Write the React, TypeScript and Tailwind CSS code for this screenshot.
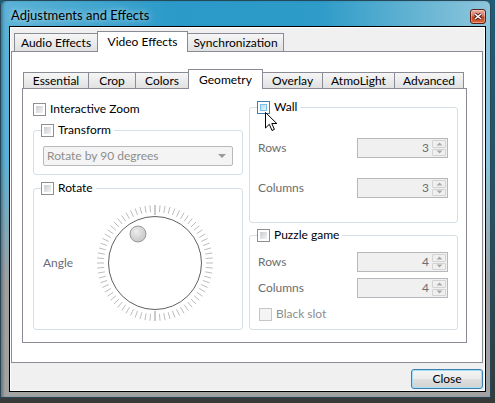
import React from 'react'

function Check({ hover, disabled }: { hover?: boolean; disabled?: boolean }) {
  if (hover) {
    return (
      <span className="block w-[13px] h-[13px] shrink-0 border border-[#3c7fb1] bg-white p-[2px]">
        <span className="block w-full h-full border border-[#79c0ec] bg-[linear-gradient(135deg,#b8dcf3,#e6f5fd)]" />
      </span>
    )
  }
  if (disabled) {
    return (
      <span className="block w-[13px] h-[13px] shrink-0 border border-[#c6c6c6] bg-[#f4f4f4]" />
    )
  }
  return (
    <span className="block w-[13px] h-[13px] shrink-0 border border-[#8e8f8f] bg-white p-[2px]">
      <span className="block w-full h-full bg-[linear-gradient(135deg,#c9ccd1,#f3f3f3)]" />
    </span>
  )
}

function Tab({ label, w, active, inner }: { label: string; w: number; active?: boolean; inner?: boolean }) {
  const base = 'flex items-center justify-center -ml-px first:ml-0 border border-b-0 border-[#898c95] whitespace-nowrap'
  if (active) {
    return (
      <div
        className={`${base} relative z-10 -mb-px bg-white ${inner ? 'h-[20px]' : 'h-[21px]'}`}
        style={{ width: w }}
      >
        {label}
      </div>
    )
  }
  return (
    <div
      className={`${base} bg-[linear-gradient(180deg,#f6f6f6,#e1e1e1)] ${inner ? 'h-[16px]' : 'h-[18px]'}`}
      style={{ width: w }}
    >
      {label}
    </div>
  )
}

function Spin({ value }: { value: string }) {
  return (
    <div className="flex w-[91px] h-[20px] border border-[#b5b8bc] bg-[#f0f0f0]">
      <div className="flex-1 flex items-center justify-end pr-[3px] text-[#6d6d6d]">{value}</div>
      <div className="w-[15px] flex flex-col gap-px py-px pr-px">
        <div className="flex-1 flex items-center justify-center border border-[#d3d3d3] rounded-[1px]">
          <svg width="7" height="4" viewBox="0 0 7 4">
            <path d="M0.5 3.5 L3.5 0.5 L6.5 3.5 Z" fill="#a8a8a8" />
          </svg>
        </div>
        <div className="flex-1 flex items-center justify-center border border-[#d3d3d3] rounded-[1px]">
          <svg width="7" height="4" viewBox="0 0 7 4">
            <path d="M0.5 0.5 L3.5 3.5 L6.5 0.5 Z" fill="#a8a8a8" />
          </svg>
        </div>
      </div>
    </div>
  )
}

function Dial() {
  const ticks = []
  for (let i = 0; i < 72; i++) {
    const a = (i * 5 * Math.PI) / 180
    const major = i % 36 === 0
    const r1 = major ? 48 : 51
    const r2 = 58
    ticks.push(
      <line
        key={i}
        x1={60 + r1 * Math.sin(a)}
        y1={60 - r1 * Math.cos(a)}
        x2={60 + r2 * Math.sin(a)}
        y2={60 - r2 * Math.cos(a)}
        stroke={major ? '#8a8a8a' : '#b4b4b4'}
        strokeWidth={0.9}
      />
    )
  }
  return (
    <svg width="120" height="120" viewBox="0 0 120 120">
      <defs>
        <radialGradient id="knob" cx="0.4" cy="0.35" r="0.7">
          <stop offset="0" stopColor="#ededed" />
          <stop offset="1" stopColor="#c4c4c4" />
        </radialGradient>
      </defs>
      {ticks}
      <circle cx="60" cy="60" r="46.5" fill="white" stroke="#616161" strokeWidth="1" />
      <circle cx="43" cy="31" r="8" fill="url(#knob)" stroke="#9a9a9a" strokeWidth="1" />
    </svg>
  )
}

function Legend({ label, hover }: { label: string; hover?: boolean }) {
  return (
    <legend className="ml-[7px] pr-[3px]">
      <span className="flex h-[14px] items-center gap-[4px]">
        <Check hover={hover} />
        <span>{label}</span>
      </span>
    </legend>
  )
}

export default function App() {
  return (
    <div className="relative w-[495px] h-[403px] bg-[linear-gradient(180deg,#1f5d77_0%,#2b4e5d_55%,#393939_100%)] font-[Lato,'Liberation_Sans',sans-serif] text-[12px] leading-none text-black">
      <div className="flex flex-col w-[491px] h-[398px] rounded-t-[6px] border border-[#25475a] pl-[8px] pr-[4px] pb-[5px] shadow-[inset_3px_0_3px_-1px_rgba(0,0,0,0.3)] bg-[linear-gradient(180deg,rgba(160,160,160,0)_0%,rgba(160,160,160,0)_40%,#a0a0a0_72%,#a3a3a3_100%),linear-gradient(90deg,#5db3d7_0%,#2b9ac8_35%,#2e9bc8_65%,#8ec6dc_100%)]">
        {/* title bar */}
        <div className="h-[25px] flex items-start justify-between">
          <span className="pl-[2px] pt-[8px] text-[13px] [text-shadow:0_0_6px_rgba(255,255,255,0.9)]">
            Adjustments and Effects
          </span>
          <div className="mt-[8px] w-[16px] h-[15px] rounded-[3px] border border-[#5b1e14] flex items-center justify-center shadow-[inset_0_0_0_1px_rgba(255,255,255,0.35)] bg-[linear-gradient(180deg,#eab0a2_0%,#d8735d_45%,#c2401f_55%,#d9693f_100%)]">
            <svg width="8" height="7" viewBox="0 0 8 7">
              <path d="M1 1 L7 6 M7 1 L1 6" stroke="#3a0e08" strokeWidth="3" />
              <path d="M1 1 L7 6 M7 1 L1 6" stroke="white" strokeWidth="1.6" />
            </svg>
          </div>
        </div>

        {/* client */}
        <div className="flex-1 border border-black">
          <div className="h-full flex flex-col border border-white bg-[#f0f0f0] pr-px">
            {/* outer tabs */}
            <div className="flex items-end h-[23px] pl-[3px]">
              <Tab label="Audio Effects" w={84} />
              <Tab label="Video Effects" w={91} active />
              <Tab label="Synchronization" w={97} />
            </div>

            {/* outer pane */}
            <div className="h-[312px] flex flex-col border border-[#898c95] bg-white pl-[10px] pr-[15px]">
              {/* inner tabs */}
              <div className="flex items-end h-[36px] pl-px">
                <Tab inner label="Essential" w={66} />
                <Tab inner label="Crop" w={48} />
                <Tab inner label="Colors" w={54} />
                <Tab inner active label="Geometry" w={75} />
                <Tab inner label="Overlay" w={61} />
                <Tab inner label="AtmoLight" w={73} />
                <Tab inner label="Advanced" w={70} />
              </div>

              {/* inner pane */}
              <div className="h-[255px] flex gap-[6px] border border-[#898c95] bg-white pl-[10px] pr-[8px] pt-[11px]">
                {/* left column */}
                <div className="w-[210px] flex flex-col">
                  <div className="mt-[2px] h-[14px] flex items-center gap-[4px]">
                    <Check />
                    <span>Interactive Zoom</span>
                  </div>

                  <fieldset className="mt-[7px] h-[52px] rounded-[3px] border border-[#d5dfe5]">
                    <Legend label="Transform" />
                    <div className="px-[9px] mt-[9px]">
                      <div className="h-[20px] flex items-center justify-between rounded-[2px] border border-[#b6babe] bg-[#f4f4f4] pl-[3px] pr-[6px] text-[#8d8d8d]">
                        <span>Rotate by 90 degrees</span>
                        <svg width="8" height="4" viewBox="0 0 8 4">
                          <path d="M0 0 L8 0 L4 4 Z" fill="#9a9a9a" />
                        </svg>
                      </div>
                    </div>
                  </fieldset>

                  <fieldset className="mt-[6px] h-[149px] rounded-[3px] border border-[#d5dfe5]">
                    <Legend label="Rotate" />
                    <div className="mt-[8px] pl-[9px] flex items-center">
                      <span className="w-[52px] text-[#6b6b78]">Angle</span>
                      <Dial />
                    </div>
                  </fieldset>
                </div>

                {/* right column */}
                <div className="w-[209px] flex flex-col">
                  <fieldset className="h-[123px] rounded-[3px] border border-[#d5dfe5]">
                    <Legend label="Wall" hover />
                    <div className="mt-[24px] h-[20px] flex items-center justify-between pl-[8px] pr-[9px]">
                      <span className="text-[#6d6d6d]">Rows</span>
                      <Spin value="3" />
                    </div>
                    <div className="mt-[20px] h-[20px] flex items-center justify-between pl-[8px] pr-[9px]">
                      <span className="text-[#6d6d6d]">Columns</span>
                      <Spin value="3" />
                    </div>
                  </fieldset>

                  <fieldset className="mt-[5px] h-[102px] rounded-[3px] border border-[#d5dfe5]">
                    <Legend label="Puzzle game" />
                    <div className="mt-[10px] h-[20px] flex items-center justify-between pl-[8px] pr-[9px]">
                      <span className="text-[#6d6d6d]">Rows</span>
                      <Spin value="4" />
                    </div>
                    <div className="mt-[6px] h-[20px] flex items-center justify-between pl-[8px] pr-[9px]">
                      <span className="text-[#6d6d6d]">Columns</span>
                      <Spin value="4" />
                    </div>
                    <div className="mt-[9px] h-[14px] flex items-center gap-[4px] pl-[9px]">
                      <Check disabled />
                      <span className="text-[#8d8d8d]">Black slot</span>
                    </div>
                  </fieldset>
                </div>
              </div>
            </div>

            {/* bottom buttons */}
            <div className="mt-[6px] flex justify-end">
              <button className="w-[72px] h-[20px] rounded-[3px] border border-[#3c7fb1] shadow-[inset_0_0_0_1px_#a6def7] bg-[linear-gradient(180deg,#f4f4f4_0%,#ececec_48%,#dedede_52%,#d2d2d2_100%)] text-[12px]">
                Close
              </button>
            </div>
          </div>
        </div>
      </div>

      {/* mouse cursor over Wall checkbox */}
      <svg className="absolute left-[265px] top-[112px]" width="13" height="20" viewBox="0 0 13 20">
        <path d="M0.5 0.5 L0.5 16 L4.3 12.3 L7 18.5 L9.4 17.4 L6.8 11.5 L11.8 11.5 Z" fill="white" stroke="black" strokeWidth="1" strokeLinejoin="round" />
      </svg>
    </div>
  )
}
